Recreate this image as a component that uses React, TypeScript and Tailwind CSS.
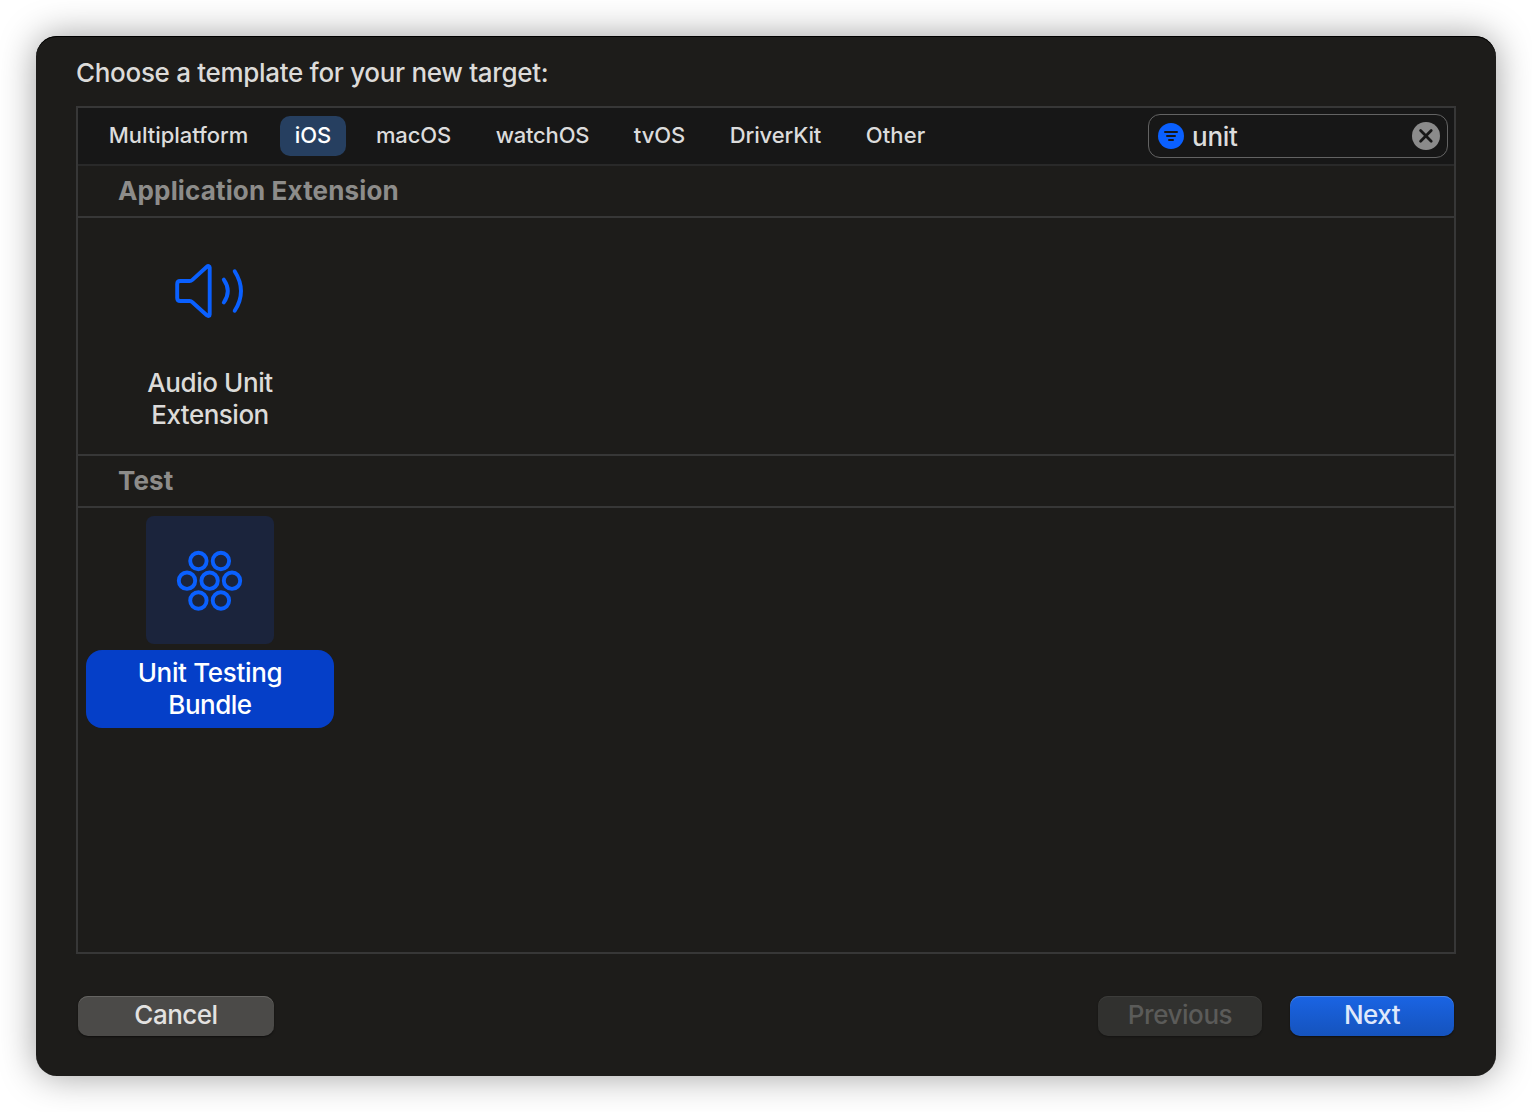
const tabs = [
  { label: "Multiplatform", box: "w-[169px] mr-px", text: "tracking-[-0.03px]" },
  { label: "iOS", box: "w-[66px]", text: "tracking-[-0.1px]", active: true },
  { label: "macOS", box: "w-[103px] mr-px", text: "tracking-[-0.15px]" },
  { label: "watchOS", box: "w-[121px] mr-px", text: "tracking-[-0.18px]" },
  { label: "tvOS", box: "w-[79px] mr-px", text: "tracking-[-0.05px]" },
  { label: "DriverKit", box: "w-[119px] mr-px", text: "tracking-[-0.15px]" },
  { label: "Other", box: "w-[87px]", text: "tracking-[0.1px]" },
];

const dots = [
  [22.4, 13], [44.9, 13],
  [11, 32.7], [33.6, 32.7], [56, 32.7],
  [22.4, 52.5], [44.9, 52.5],
];

function SpeakerIcon() {
  return (
    <svg className="block" width="128" height="128" viewBox="0 0 128 128" fill="none" stroke="#0a60ff" strokeWidth="3.9" strokeLinecap="round" strokeLinejoin="round">
      <path d="M63.7 41.6V88.4C63.7 90.2 62.2 90.4 60.8 89.3L46.4 76.2Q45.2 75 43.6 75H34.2Q31.2 75 31.2 72V58Q31.2 55 34.2 55H43.6Q45.2 55 46.4 53.9L60.8 40.7C62.2 39.5 63.7 39.9 63.7 41.6Z" />
      <path d="M77.8 53.6Q85.8 65.1 77.8 76.5M88.7 45.2Q101.3 65.1 88.7 84.8" />
    </svg>
  );
}

function HexDotsIcon() {
  return (
    <svg className="block" width="68" height="66" viewBox="0 0 68 66" fill="none" stroke="#0a60ff" strokeWidth="3.9">
      {dots.map(([cx, cy]) => (
        <circle key={`${cx}-${cy}`} cx={cx} cy={cy} r="8.2" />
      ))}
    </svg>
  );
}

function SearchField() {
  return (
    <div className="flex h-11 w-[300px] items-center rounded-[12px] border border-[#636363] pl-[9px] pr-[7px]">
      <svg width="26" height="26" viewBox="0 0 26 26" stroke="#171717" strokeWidth="2" strokeLinecap="round">
        <circle cx="13" cy="13" r="13" fill="#0a60ff" stroke="none" />
        <path d="M7 9H19M9 13H17M11 17H15" />
      </svg>
      <span className="ml-2 flex-1 pt-0.5 text-[26px] leading-8 tracking-[-0.25px] text-[#dcdcdc]">unit</span>
      <svg width="28" height="28" viewBox="0 0 28 28" stroke="#171717" strokeWidth="2.8" strokeLinecap="round">
        <circle cx="14" cy="14" r="14" fill="#8b8b8b" stroke="none" />
        <path d="M8.6 8.6L19.2 19.2M19.2 8.6L8.6 19.2" />
      </svg>
    </div>
  );
}

function SectionHeader({ label, spacing }: { label: string; spacing: string }) {
  return (
    <h2 className="h-[52px] border-b-2 border-[#373737] pl-10 text-[26px] font-bold leading-[50px] text-[#8d8c8a]">
      <span className={spacing}>{label}</span>
    </h2>
  );
}

export default function App() {
  return (
    <div className="h-[1112px] w-[1532px] overflow-hidden bg-white p-9 font-['Inter',sans-serif] font-[450]">
      <main className="flex h-[1040px] w-[1460px] flex-col rounded-[21px] bg-[#1d1c1a] px-10 shadow-[0_0_36px_rgba(0,0,0,0.38),inset_0_1px_0_#000]">
        <h1 className="h-[70px] pt-[21px] text-[26px] font-[450] leading-8 text-[#dcdbd9]">
          <span className="tracking-[-0.31px]">Choose a template for your new target:</span>
        </h1>

        <section className="h-[848px] border-2 border-[#373737]">
          <nav className="flex h-[58px] items-start border-b-2 border-[#292929] bg-[#171717] pl-4 pr-[6px]">
            <div className="flex flex-1 gap-4 pt-2">
              {tabs.map((t) => (
                <button
                  key={t.label}
                  className={`flex h-10 items-center justify-center rounded-[10px] pb-0.5 text-[22px] leading-7 ${t.box} ${t.active ? "bg-[#263f60] text-white" : "text-[#dcdcdc]"}`}
                >
                  <span className={t.text}>{t.label}</span>
                </button>
              ))}
            </div>
            <div className="pt-1.5">
              <SearchField />
            </div>
          </nav>

          <SectionHeader label="Application Extension" spacing="tracking-[0.15px]" />
          <div className="h-[238px] border-b-2 border-[#373737] pl-2 pt-2">
            <div className="flex w-[248px] flex-col items-center">
              <SpeakerIcon />
              <div className="mt-1.5 flex w-full flex-col pt-[7px] text-center text-[26px] leading-8 text-[#dcdbd9]">
                <span className="tracking-[-0.4px]">Audio Unit</span>
                <span className="tracking-[-0.5px]">Extension</span>
              </div>
            </div>
          </div>

          <SectionHeader label="Test" spacing="tracking-[0.1px]" />
          <div className="pl-2 pt-2">
            <div className="flex w-[248px] flex-col items-center">
              <div className="flex h-32 w-32 justify-center rounded-lg bg-[#1b243c] pt-8">
                <HexDotsIcon />
              </div>
              <div className="mt-1.5 flex h-[78px] w-full flex-col rounded-[16px] bg-[#053fc8] pt-[7px] text-center text-[26px] leading-8 text-white">
                <span className="tracking-[-0.33px]">Unit Testing</span>
                <span className="tracking-[-0.5px]">Bundle</span>
              </div>
            </div>
          </div>
        </section>

        <footer className="mt-[42px] flex px-0.5 text-[26px] leading-[38px]">
          <button className="h-10 w-[196px] rounded-[10px] bg-[#4b4a48] pb-0.5 text-[#e3e2e1] shadow-[0_1px_2px_rgba(0,0,0,0.5),inset_0_1px_0_#656462]">
            <span className="tracking-[-0.5px]">Cancel</span>
          </button>
          <button className="ml-auto h-10 w-[164px] rounded-[10px] bg-[#31312f] pb-0.5 text-[#5b5b59] shadow-[0_1px_2px_rgba(0,0,0,0.3),inset_0_1px_0_#3c3c3a]">
            <span className="tracking-[-0.45px]">Previous</span>
          </button>
          <button className="ml-7 h-10 w-[164px] rounded-[10px] bg-gradient-to-b from-[#1a64e4] to-[#1553bd] pb-0.5 text-[#dfe8fb] shadow-[0_1px_2px_rgba(0,0,0,0.5),inset_0_1px_0_#4684e9]">
            <span className="tracking-[-0.5px]">Next</span>
          </button>
        </footer>
      </main>
    </div>
  );
}
